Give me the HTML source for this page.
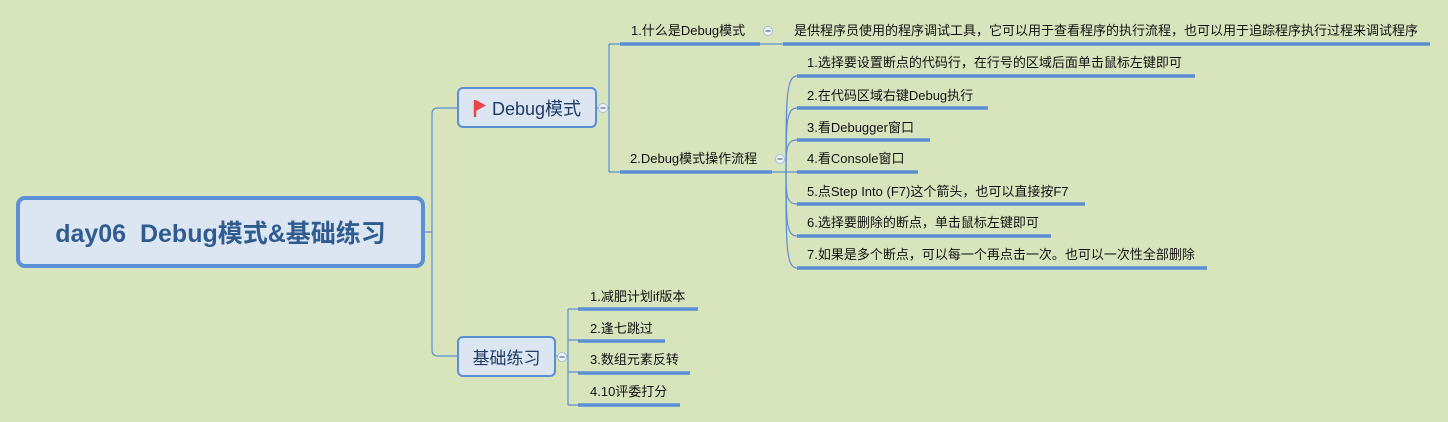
<!DOCTYPE html>
<html><head><meta charset="utf-8">
<style>
html,body{margin:0;padding:0}
body{width:1448px;height:422px;background:#d8e4bc;position:relative;overflow:hidden;font-family:"Liberation Sans","Noto Sans CJK SC",sans-serif}
.t{position:absolute;font-size:13px;color:#111;white-space:nowrap;line-height:16px}
.box{position:absolute;box-sizing:border-box;background:#dce6f2;border:2px solid #5b8fd4;border-radius:6px;color:#1f3a66;display:flex;align-items:center;justify-content:center;white-space:nowrap}
</style></head><body>
<svg width="1448" height="422" style="position:absolute;left:0;top:0">
<g fill="none" stroke="#5b8fd4" stroke-width="1.2">
<path d="M424 232 H432"/>
<path d="M458 108 H438 Q432 108 432 114 V350 Q432 356 438 356 H458"/>
<path d="M596 108 H609 M609 44 V172 M609 44 H620 M609 172 H620"/>
<path d="M760 44 H783"/>
<path d="M772 172 H797"/>
<path d="M786 172 C786 100 786 76 797 76"/>
<path d="M786 172 C786 125 786 108 797 108"/>
<path d="M786 172 C786 150 786 140 797 140"/>
<path d="M786 172 C786 194 786 204 797 204"/>
<path d="M786 172 C786 220 786 236 797 236"/>
<path d="M786 172 C786 245 786 268 797 268"/>
<path d="M555 356 H568 M568 309 V405 M568 309 H578 M568 340 H578 M568 372 H578 M568 405 H578"/>
</g>
<g stroke="#5b8fd4" stroke-width="3.5">
<path d="M620 44 H760"/><path d="M783 44 H1430"/>
<path d="M620 172 H772"/>
<path d="M797 76 H1195"/><path d="M797 108 H988"/><path d="M797 140 H930"/><path d="M797 172 H918"/>
<path d="M797 204 H1085"/><path d="M797 236 H1051"/><path d="M797 268 H1207"/>
<path d="M578 309 H698"/><path d="M578 341 H665"/><path d="M578 373 H690"/><path d="M578 405 H680"/>
</g>
<g fill="#eef2f8" stroke="#a8bfe0" stroke-width="1">
<circle cx="603" cy="108" r="4.5"/><circle cx="768" cy="31" r="4.5"/><circle cx="780" cy="159" r="4.5"/><circle cx="562" cy="357" r="4.5"/>
</g>
<g stroke="#5a6f90" stroke-width="1.2">
<path d="M600.5 108 H605.5 M765.5 31 H770.5 M777.5 159 H782.5 M559.5 357 H564.5"/>
</g>
</svg>
<div class="box" style="left:16px;top:196px;width:409px;height:72px;border-width:4px;border-radius:9px;font-size:25px;font-weight:bold;color:#2f5b8f">day06&nbsp; Debug模式&amp;基础练习</div>
<div class="box" style="left:457px;top:87px;width:140px;height:41px;font-size:18px"><svg width="14" height="18" style="margin-right:5px"><path d="M2 1 V18" stroke="#e8474a" stroke-width="2.5"/><path d="M3 1 L13 6.5 L3 12 Z" fill="#e8474a"/></svg>Debug模式</div>
<div class="box" style="left:457px;top:336px;width:99px;height:41px;font-size:17px">基础练习</div>
<div class="t" style="left:631px;top:23px">1.什么是Debug模式</div>
<div class="t" style="left:794px;top:23px">是供程序员使用的程序调试工具，它可以用于查看程序的执行流程，也可以用于追踪程序执行过程来调试程序</div>
<div class="t" style="left:630px;top:151px">2.Debug模式操作流程</div>
<div class="t" style="left:807px;top:55px">1.选择要设置断点的代码行，在行号的区域后面单击鼠标左键即可</div>
<div class="t" style="left:807px;top:88px">2.在代码区域右键Debug执行</div>
<div class="t" style="left:807px;top:120px">3.看Debugger窗口</div>
<div class="t" style="left:807px;top:151px">4.看Console窗口</div>
<div class="t" style="left:807px;top:184px">5.点Step Into (F7)这个箭头，也可以直接按F7</div>
<div class="t" style="left:807px;top:215px">6.选择要删除的断点，单击鼠标左键即可</div>
<div class="t" style="left:807px;top:247px">7.如果是多个断点，可以每一个再点击一次。也可以一次性全部删除</div>
<div class="t" style="left:590px;top:289px">1.减肥计划if版本</div>
<div class="t" style="left:590px;top:321px">2.逢七跳过</div>
<div class="t" style="left:590px;top:352px">3.数组元素反转</div>
<div class="t" style="left:590px;top:384px">4.10评委打分</div>
</body></html>
